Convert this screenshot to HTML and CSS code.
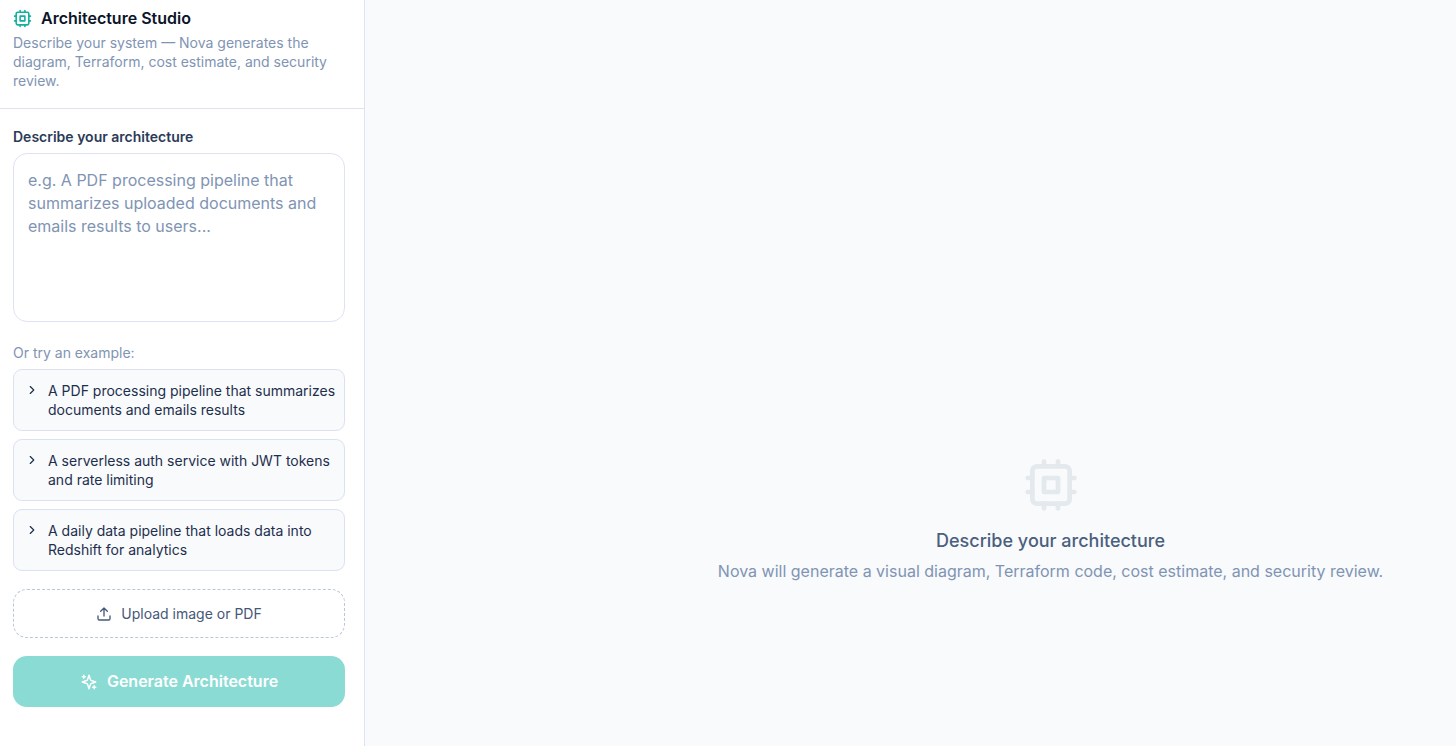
FILE: index.html
```html
<!DOCTYPE html>
<html lang="en">
<head>
    <meta charset="UTF-8">
    <meta name="viewport" content="width=device-width, initial-scale=1.0">
    <title>Architecture Studio</title>
    <link rel="stylesheet" href="styles.css">
</head>
<body>
    <div class="studio">
        <aside class="sidebar">
            <header class="sidebar-header">
                <h1 class="title">
                    <svg class="icon icon-brand" viewBox="0 0 24 24" aria-hidden="true">
                        <rect x="4" y="4" width="16" height="16" rx="2"/>
                        <rect x="9" y="9" width="6" height="6"/>
                        <path d="M15 2v2M15 20v2M2 15h2M2 9h2M20 15h2M20 9h2M9 2v2M9 20v2"/>
                    </svg>
                    Architecture Studio
                </h1>
                <p class="subtitle">Describe your system — Nova generates the diagram, Terraform, cost estimate, and security review.</p>
            </header>

            <form class="sidebar-form">
                <div class="field">
                    <label class="field-label" for="description">Describe your architecture</label>
                    <textarea class="description" id="description" placeholder="e.g. A PDF processing pipeline that summarizes uploaded documents and emails results to users..."></textarea>
                </div>

                <div class="examples">
                    <p class="examples-title">Or try an example:</p>
                    <div class="examples-list">
                        <button type="button" class="example">
                            <svg class="icon icon-chevron" viewBox="0 0 24 24" aria-hidden="true"><path d="m9 18 6-6-6-6"/></svg>
                            <span>A PDF processing pipeline that summarizes documents and emails results</span>
                        </button>
                        <button type="button" class="example">
                            <svg class="icon icon-chevron" viewBox="0 0 24 24" aria-hidden="true"><path d="m9 18 6-6-6-6"/></svg>
                            <span>A serverless auth service with JWT tokens and rate limiting</span>
                        </button>
                        <button type="button" class="example">
                            <svg class="icon icon-chevron" viewBox="0 0 24 24" aria-hidden="true"><path d="m9 18 6-6-6-6"/></svg>
                            <span>A daily data pipeline that loads data into Redshift for analytics</span>
                        </button>
                    </div>
                </div>

                <button type="button" class="upload">
                    <svg class="icon icon-upload" viewBox="0 0 24 24" aria-hidden="true">
                        <path d="M21 15v4a2 2 0 0 1-2 2H5a2 2 0 0 1-2-2v-4"/>
                        <path d="m17 8-5-5-5 5M12 3v12"/>
                    </svg>
                    Upload image or PDF
                </button>

                <button type="submit" class="generate" disabled>
                    <svg class="icon icon-sparkles" viewBox="0 0 24 24" aria-hidden="true">
                        <path d="m12 3-1.912 5.813a2 2 0 0 1-1.275 1.275L3 12l5.813 1.912a2 2 0 0 1 1.275 1.275L12 21l1.912-5.813a2 2 0 0 1 1.275-1.275L21 12l-5.813-1.912a2 2 0 0 1-1.275-1.275L12 3Z"/>
                        <path d="M5 3v4M19 17v4M3 5h4M17 19h4"/>
                    </svg>
                    Generate Architecture
                </button>
            </form>
        </aside>

        <main class="canvas">
            <div class="empty">
                <svg class="icon icon-empty" viewBox="0 0 24 24" aria-hidden="true">
                    <rect x="4" y="4" width="16" height="16" rx="2"/>
                    <rect x="9" y="9" width="6" height="6"/>
                    <path d="M15 2v2M15 20v2M2 15h2M2 9h2M20 15h2M20 9h2M9 2v2M9 20v2"/>
                </svg>
                <h2 class="empty-title">Describe your architecture</h2>
                <p class="empty-text">Nova will generate a visual diagram, Terraform code, cost estimate, and security review.</p>
            </div>
        </main>
    </div>
</body>
</html>
```

FILE: styles.css
```css
* {
    box-sizing: border-box;
}
body {
    margin: 0;
    font-family: Inter, "Liberation Sans", sans-serif;
    font-size: 14px;
    line-height: 19px;
    color: #1e2f4d;
    background-color: #f8fafc;
}
h1, h2, p {
    margin: 0;
}
button, textarea {
    font: inherit;
}
.icon {
    flex-shrink: 0;
    fill: none;
    stroke: currentColor;
    stroke-width: 2;
    stroke-linecap: round;
    stroke-linejoin: round;
}
.studio {
    display: flex;
    min-height: 100vh;
}

/* sidebar */
.sidebar {
    flex: 0 0 365px;
    background-color: #fff;
    border-right: 1px solid #dfe2f4;
}
.sidebar-header {
    padding: 8px 19px 18px 13px;
    border-bottom: 1px solid #dfe2f4;
}
.title {
    display: flex;
    align-items: center;
    gap: 9px;
    margin-bottom: 5px;
    font-size: 16px;
    line-height: 20px;
    font-weight: 600;
    color: #0b1428;
}
.icon-brand {
    width: 19px;
    height: 19px;
    color: #14b09c;
}
.subtitle, .examples-title {
    color: #8094b3;
}
.sidebar-form {
    display: flex;
    flex-direction: column;
    gap: 18px;
    padding: 18px 19px 18px 13px;
}
.field {
    display: flex;
    flex-direction: column;
    gap: 7px;
}
.field-label {
    font-weight: 600;
    color: #2b3b57;
}
.description {
    width: 100%;
    height: 169px;
    padding: 15px 14px;
    border: 1px solid #dfe2f4;
    border-radius: 14px;
    background-color: #fff;
    font-size: 16px;
    line-height: 23px;
    color: #1e2f4d;
    resize: none;
}
.description::placeholder {
    color: #8094b3;
}
.examples {
    display: flex;
    flex-direction: column;
    gap: 7px;
    margin-top: 3px;
}
.examples-list {
    display: flex;
    flex-direction: column;
    gap: 8px;
}
.example {
    display: flex;
    align-items: flex-start;
    gap: 9px;
    padding: 11px 8px 11px 11px;
    border: 1px solid #dce1f2;
    border-radius: 9px;
    background-color: #f8fafc;
    color: #1e2f4d;
    text-align: left;
}
.icon-chevron {
    width: 14px;
    height: 14px;
    margin-top: 2px;
}
.upload {
    display: flex;
    align-items: center;
    justify-content: center;
    gap: 9px;
    padding: 14px;
    border: 1px dashed #b9c6dc;
    border-radius: 14px;
    background-color: #fff;
    color: #455877;
}
.icon-upload {
    width: 16px;
    height: 16px;
}
.generate {
    display: flex;
    align-items: center;
    justify-content: center;
    gap: 9px;
    padding: 14px;
    border: 0;
    border-radius: 14px;
    background-color: #8adbd3;
    font-size: 16px;
    line-height: 23px;
    font-weight: 600;
    color: #fff;
}
.icon-sparkles {
    width: 18px;
    height: 18px;
}

/* empty canvas */
.canvas {
    flex: 1;
    display: flex;
    align-items: center;
    justify-content: center;
    padding: 294px 0 0 280px;
}
.empty {
    display: flex;
    flex-direction: column;
    align-items: center;
    text-align: center;
}
.icon-empty {
    width: 56px;
    height: 56px;
    margin-bottom: 14px;
    color: #e3e9ed;
}
.empty-title {
    margin-bottom: 5px;
    font-size: 18px;
    line-height: 28px;
    font-weight: 500;
    color: #4b5f7e;
}
.empty-text {
    font-size: 16px;
    line-height: 23px;
    color: #8094b3;
}
```
